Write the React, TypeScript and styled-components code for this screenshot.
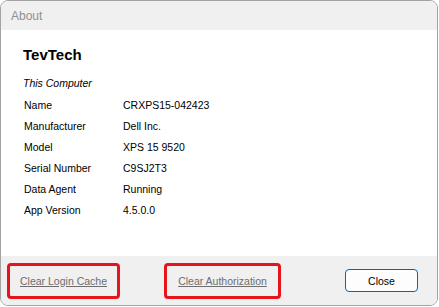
import styled, { createGlobalStyle } from 'styled-components'

const GlobalStyle = createGlobalStyle`
  html, body {
    margin: 0;
    padding: 0;
    background: #ffffff;
  }
  body {
    font-family: "Liberation Sans", Arial, sans-serif;
  }
`

const computerInfo = [
  { label: 'Name', value: 'CRXPS15-042423' },
  { label: 'Manufacturer', value: 'Dell Inc.' },
  { label: 'Model', value: 'XPS 15 9520' },
  { label: 'Serial Number', value: 'C9SJ2T3' },
  { label: 'Data Agent', value: 'Running' },
  { label: 'App Version', value: '4.5.0.0' },
]

export default function App() {
  return (
    <>
      <GlobalStyle />
      <Window>
        <TitleBar>About</TitleBar>
        <Content>
          <Heading>TevTech</Heading>
          <Section>This Computer</Section>
          <InfoGrid>
            {computerInfo.map(item => (
              <InfoRow key={item.label}>
                <InfoLabel>{item.label}</InfoLabel>
                <InfoValue>{item.value}</InfoValue>
              </InfoRow>
            ))}
          </InfoGrid>
        </Content>
        <Footer>
          <Highlight $width={113}>
            <LinkButton href="#">Clear Login Cache</LinkButton>
          </Highlight>
          <Highlight $width={117}>
            <LinkButton href="#">Clear Authorization</LinkButton>
          </Highlight>
          <CloseButton type="button">Close</CloseButton>
        </Footer>
      </Window>
    </>
  )
}

const Window = styled.div`
  box-sizing: border-box;
  width: 438px;
  height: 306px;
  border: 1px solid #a3a3a3;
  border-radius: 8px;
  overflow: hidden;
  display: flex;
  flex-direction: column;
  background: #ffffff;
`

const TitleBar = styled.div`
  height: 29px;
  flex: none;
  display: flex;
  align-items: center;
  padding-left: 10px;
  background: #f0f0f0;
  color: #8f8f8f;
  font-size: 12px;
`

const Content = styled.div`
  flex: 1;
  padding: 16px 22px 0;
  background: #ffffff;
  color: #000000;
  font-size: 10.5px;
`

const Heading = styled.div`
  font-size: 15px;
  font-weight: bold;
  line-height: 18px;
  margin-bottom: 9px;
`

const Section = styled.div`
  font-style: italic;
  line-height: 21px;
`

const InfoGrid = styled.div`
  display: flex;
  flex-direction: column;
  margin-top: 1px;
  padding-left: 1px;
`

const InfoRow = styled.div`
  display: grid;
  grid-template-columns: 99px 1fr;
  height: 21.1px;
  line-height: 21.1px;
`

const InfoLabel = styled.span``

const InfoValue = styled.span``

const Footer = styled.div`
  height: 49px;
  flex: none;
  display: flex;
  align-items: center;
  gap: 44px;
  padding: 0 19px 0 6px;
  background: #f0f0f0;
`

const Highlight = styled.div<{ $width: number }>`
  box-sizing: border-box;
  width: ${p => p.$width}px;
  height: 36px;
  border: 3px solid #e8141b;
  border-radius: 4px;
  display: flex;
  align-items: center;
  justify-content: center;
`

const LinkButton = styled.a`
  color: #6d6d6d;
  font-size: 10.5px;
  text-decoration: underline;
`

const CloseButton = styled.button`
  margin-left: auto;
  box-sizing: border-box;
  width: 73px;
  height: 23px;
  border: 1px solid #0067c0;
  border-radius: 4px;
  background: #fdfdfd;
  color: #000000;
  font-family: "Liberation Sans", Arial, sans-serif;
  font-size: 10.5px;
  padding: 0;
`
